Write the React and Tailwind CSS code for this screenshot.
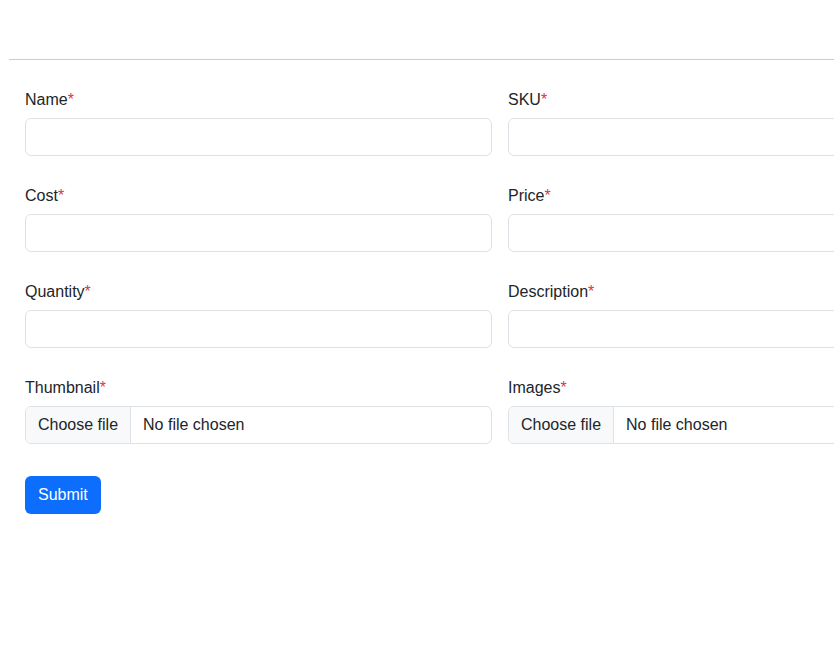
import React from "react";

const Label = ({ children }) => (
  <label className="block h-6 pt-[1px] leading-6 mb-[6px] text-[16px] text-[#212529] box-content">
    {children}
    <span className="text-[#dc3545]">*</span>
  </label>
);

const TextField = ({ label }) => (
  <div className="mb-[27px]">
    <Label>{label}</Label>
    <input
      type="text"
      className="block w-full h-[38px] px-3 border border-[#dee2e6] rounded-[6px] bg-white text-[16px] outline-none"
    />
  </div>
);

const FileField = ({ label }) => (
  <div className="mb-[32px]">
    <Label>{label}</Label>
    <div className="flex h-[38px] border border-[#dee2e6] rounded-[6px] overflow-hidden bg-white text-[16px] text-[#212529]">
      <div className="flex items-center px-3 bg-[#f8f9fa] border-r border-[#dee2e6]">Choose file</div>
      <div className="flex items-center px-3">No file chosen</div>
    </div>
  </div>
);

export default function App() {
  return (
    <div className="w-full min-h-[669px] overflow-hidden bg-white font-['Liberation_Sans',Arial,sans-serif]">
      <div className="h-[59px]" />
      <hr className="ml-[9px] border-0 border-t border-[#cccccc]" />
      <form className="pt-[27px] pl-[25px]" onSubmit={(e) => e.preventDefault()}>
        <div className="grid grid-cols-[467px_467px] gap-x-[16px] w-[950px]">
          <TextField label="Name" />
          <TextField label="SKU" />
          <TextField label="Cost" />
          <TextField label="Price" />
          <TextField label="Quantity" />
          <TextField label="Description" />
          <FileField label="Thumbnail" />
          <FileField label="Images" />
        </div>
        <button
          type="submit"
          className="h-[38px] px-[13px] rounded-[6px] bg-[#0d6efd] text-white text-[16px]"
        >
          Submit
        </button>
      </form>
    </div>
  );
}
